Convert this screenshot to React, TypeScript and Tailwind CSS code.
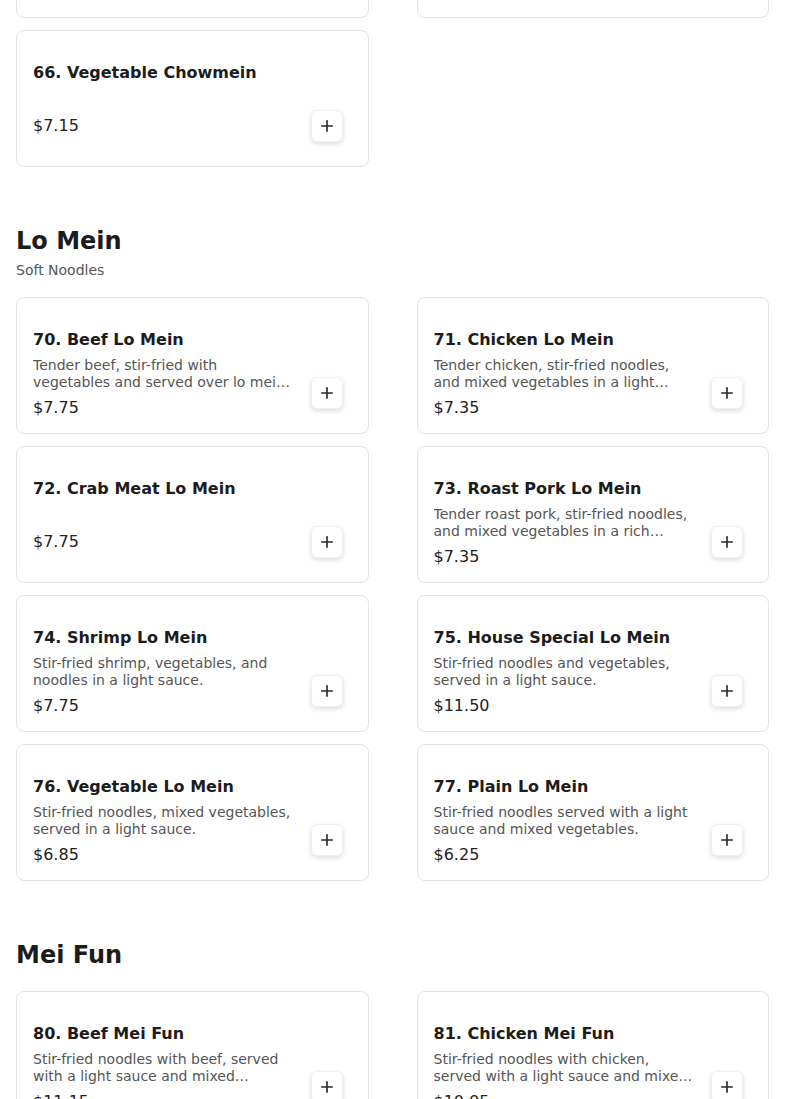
import { Plus } from "lucide-react";

type Item = {
  num: number;
  name: string;
  desc?: string;
  price: string;
};

type Section = {
  title?: string;
  subtitle?: string;
  items: Item[];
};

// tail end of the previous section, mostly scrolled out of view
const chowmeinTail: Item[] = [
  { num: 64, name: "Shrimp Chowmein", desc: "Stir-fried shrimp with vegetables and crispy noodles.", price: "$7.75" },
  { num: 65, name: "House Special Chowmein", desc: "Chicken, pork and shrimp with mixed vegetables.", price: "$8.95" },
  { num: 66, name: "Vegetable Chowmein", price: "$7.15" },
];

const sections: Section[] = [
  {
    title: "Lo Mein",
    subtitle: "Soft Noodles",
    items: [
      { num: 70, name: "Beef Lo Mein", desc: "Tender beef, stir-fried with vegetables and served over lo mein noodles.", price: "$7.75" },
      { num: 71, name: "Chicken Lo Mein", desc: "Tender chicken, stir-fried noodles, and mixed vegetables in a light sauce.", price: "$7.35" },
      { num: 72, name: "Crab Meat Lo Mein", price: "$7.75" },
      { num: 73, name: "Roast Pork Lo Mein", desc: "Tender roast pork, stir-fried noodles, and mixed vegetables in a rich brown sauce.", price: "$7.35" },
      { num: 74, name: "Shrimp Lo Mein", desc: "Stir-fried shrimp, vegetables, and noodles in a light sauce.", price: "$7.75" },
      { num: 75, name: "House Special Lo Mein", desc: "Stir-fried noodles and vegetables, served in a light sauce.", price: "$11.50" },
      { num: 76, name: "Vegetable Lo Mein", desc: "Stir-fried noodles, mixed vegetables, served in a light sauce.", price: "$6.85" },
      { num: 77, name: "Plain Lo Mein", desc: "Stir-fried noodles served with a light sauce and mixed vegetables.", price: "$6.25" },
    ],
  },
  {
    title: "Mei Fun",
    items: [
      { num: 80, name: "Beef Mei Fun", desc: "Stir-fried noodles with beef, served with a light sauce and mixed vegetables.", price: "$11.15" },
      { num: 81, name: "Chicken Mei Fun", desc: "Stir-fried noodles with chicken, served with a light sauce and mixed vegetables.", price: "$10.95" },
      { num: 82, name: "Shrimp Mei Fun", desc: "Stir-fried rice noodles with shrimp and mixed vegetables.", price: "$11.15" },
      { num: 83, name: "Singapore Mei Fun", desc: "Curry flavored rice noodles with shrimp and roast pork.", price: "$11.50" },
    ],
  },
];

function ItemCard({ item }: { item: Item }) {
  return (
    <div className="h-[137px] bg-white border border-[#e4e4e4] rounded-lg px-4 flex gap-4">
      <div className="flex-1 min-w-0 pt-[28px]">
        <div className="flex flex-col min-h-[79px]">
          <div className="text-base leading-7 font-bold text-[#1c1c1c]">
            {item.num}. {item.name}
          </div>
          {item.desc && (
            <div className="mt-[3px] text-sm leading-[17px] text-[#555555] line-clamp-2">
              {item.desc}
            </div>
          )}
          <div className={`${item.desc ? "mt-[5px]" : "mt-auto"} text-base leading-6 text-[#222222]`}>
            {item.price}
          </div>
        </div>
      </div>
      <div className="shrink-0 self-end mb-6 mr-[9px]">
        <button className="w-8 h-8 flex items-center justify-center bg-white rounded-md border border-[#f0f0f0] shadow-[0_2px_5px_rgba(0,0,0,0.14)] text-[#2a2a2a]">
          <Plus size={18} strokeWidth={2.2} />
        </button>
      </div>
    </div>
  );
}

function ItemGrid({ items }: { items: Item[] }) {
  return (
    <div className="grid grid-cols-2 gap-x-12 gap-y-3">
      {items.map((item) => (
        <ItemCard key={item.num} item={item} />
      ))}
    </div>
  );
}

export default function App() {
  return (
    <div className="min-h-screen bg-white font-['DejaVu_Sans',sans-serif] overflow-hidden">
      <div className="px-4 -mt-[119px] flex flex-col gap-[58px]">
        <ItemGrid items={chowmeinTail} />
        {sections.map((section) => (
          <section key={section.title} className="flex flex-col">
            <div className="flex flex-col mb-4">
              <h2 className="text-2xl leading-8 font-bold text-[#1c1c1c] mb-1">{section.title}</h2>
              {section.subtitle && (
                <p className="text-sm leading-[18px] mb-0.5 text-[#555555]">{section.subtitle}</p>
              )}
            </div>
            <ItemGrid items={section.items} />
          </section>
        ))}
      </div>
    </div>
  );
}
